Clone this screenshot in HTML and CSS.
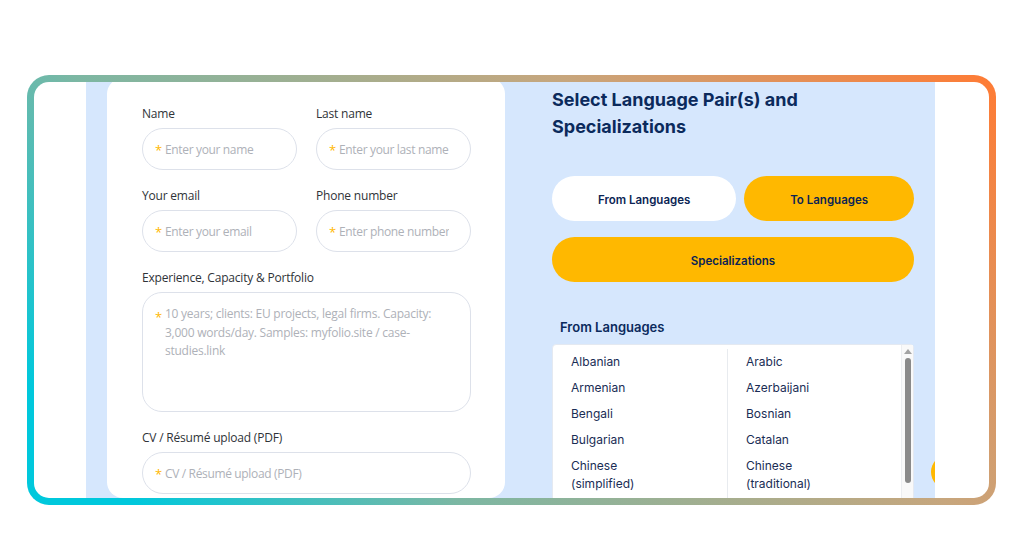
FILE: index.html
```html
<!DOCTYPE html>
<html lang="en">
<head>
    <meta charset="UTF-8">
    <meta name="viewport" content="width=device-width, initial-scale=1.0">
    <title>Translator application</title>
    <link rel="stylesheet" href="styles.css">
</head>
<body>
    <div class="frame">
        <div class="frame-inner">
            <div class="panel">
                <!-- left: contact form -->
                <div class="card">
                    <div class="row">
                        <div class="field">
                            <label class="field-label">Name</label>
                            <div class="input-box">
                                <span class="req">*</span>
                                <input class="input" type="text" placeholder="Enter your name">
                            </div>
                        </div>
                        <div class="field">
                            <label class="field-label">Last name</label>
                            <div class="input-box">
                                <span class="req">*</span>
                                <input class="input" type="text" placeholder="Enter your last name">
                            </div>
                        </div>
                    </div>
                    <div class="row">
                        <div class="field">
                            <label class="field-label">Your email</label>
                            <div class="input-box">
                                <span class="req">*</span>
                                <input class="input" type="email" placeholder="Enter your email">
                            </div>
                        </div>
                        <div class="field">
                            <label class="field-label">Phone number</label>
                            <div class="input-box">
                                <span class="req">*</span>
                                <input class="input" type="tel" placeholder="Enter phone number">
                            </div>
                        </div>
                    </div>
                    <div class="field">
                        <label class="field-label">Experience, Capacity &amp; Portfolio</label>
                        <div class="input-box area-box">
                            <span class="req">*</span>
                            <textarea class="input area" placeholder="10 years; clients: EU projects, legal firms. Capacity: 3,000 words/day. Samples: myfolio.site / case-studies.link"></textarea>
                        </div>
                    </div>
                    <div class="field">
                        <label class="field-label">CV / Résumé upload (PDF)</label>
                        <div class="input-box">
                            <span class="req">*</span>
                            <input class="input" type="text" placeholder="CV / Résumé upload (PDF)">
                        </div>
                    </div>
                </div>

                <!-- right: language pairs -->
                <div class="pairs">
                    <h2 class="pairs-title">Select Language Pair(s) and Specializations</h2>
                    <div class="tabs">
                        <button class="tab tab-active">From Languages</button>
                        <button class="tab">To Languages</button>
                        <button class="tab tab-wide">Specializations</button>
                    </div>
                    <p class="list-title">From Languages</p>
                    <div class="list-box">
                        <div class="list-cols">
                            <ul class="lang-col">
                                <li>Albanian</li>
                                <li>Armenian</li>
                                <li>Bengali</li>
                                <li>Bulgarian</li>
                                <li>Chinese (simplified)</li>
                            </ul>
                            <ul class="lang-col">
                                <li>Arabic</li>
                                <li>Azerbaijani</li>
                                <li>Bosnian</li>
                                <li>Catalan</li>
                                <li>Chinese (traditional)</li>
                            </ul>
                        </div>
                        <div class="scrollbar">
                            <span class="scroll-up"></span>
                            <span class="scroll-thumb"></span>
                        </div>
                    </div>
                </div>

                <span class="fab"></span>
            </div>
        </div>
    </div>
</body>
</html>
```

FILE: styles.css
```css
* {
    box-sizing: border-box;
}
body {
    margin: 0;
    background: #ffffff;
    font-family: 'Open Sans', sans-serif;
}
.frame {
    width: 969px;
    height: 430px;
    margin: 75px 0 0 27px;
    padding: 7px;
    border-radius: 22px;
    background: linear-gradient(48deg, #00c8dc 0%, #00c8dc 8%, #7cb7a3 32%, #c7a67d 68%, #ff7b34 100%);
}
.frame-inner {
    height: 100%;
    border-radius: 15px;
    background: #ffffff;
    overflow: hidden;
}
.panel {
    position: relative;
    display: flex;
    width: 849px;
    height: 100%;
    margin-left: 52px;
    padding-left: 21px;
    background: #d6e7fd;
    overflow: hidden;
}

/* form card */
.card {
    width: 398px;
    flex-shrink: 0;
    margin-top: -4px;
    padding: 27px 34px 0 35px;
    background: #ffffff;
    border-radius: 16px;
}
.row {
    display: flex;
    gap: 19px;
}
.row .field {
    flex: 1 1 0;
    min-width: 0;
}
.field {
    margin-bottom: 17px;
}
.field-label {
    display: block;
    margin-bottom: 5px;
    font-size: 12px;
    letter-spacing: -0.2px;
    line-height: 18px;
    color: #2f3338;
}
.input-box {
    display: flex;
    align-items: center;
    height: 42px;
    padding: 0 21px 0 12px;
    border: 1px solid #dde1ea;
    border-radius: 21px;
    background: #ffffff;
}
.req {
    width: 10px;
    flex-shrink: 0;
    font-family: 'Open Sans', sans-serif;
    font-size: 13px;
    color: #ffb800;
    line-height: 1;
    padding-top: 3px;
}
.input {
    flex: 1;
    width: 0;
    min-width: 0;
    border: none;
    outline: none;
    padding: 0;
    background: transparent;
    font-family: 'Open Sans', sans-serif;
    font-size: 12px;
    letter-spacing: -0.35px;
    color: #2f3338;
}
.input::placeholder {
    color: #aeb1b8;
}
.area-box {
    height: 120px;
    align-items: flex-start;
    padding-top: 12px;
    border-radius: 20px;
}
.area-box .req {
    padding-top: 6px;
}
.area {
    height: 96px;
    resize: none;
    letter-spacing: -0.25px;
    line-height: 18.5px;
}

/* language pairs */
.pairs {
    width: 362px;
    flex-shrink: 0;
    margin-left: 47px;
    padding-top: 4px;
    font-family: 'Inter', sans-serif;
    color: #0b2a5c;
}
.pairs-title {
    margin: 0;
    font-size: 18px;
    font-weight: 700;
    line-height: 27px;
    width: 300px;
}
.tabs {
    display: flex;
    flex-wrap: wrap;
    gap: 16px 8px;
    margin-top: 36px;
}
.tab {
    flex: 1 1 auto;
    height: 45px;
    padding: 2px 40px 0;
    border: none;
    border-radius: 23px;
    background: #ffb800;
    font-family: 'Inter', sans-serif;
    font-size: 11.5px;
    font-weight: 600;
    color: #0b2454;
    cursor: pointer;
}
.tab-active {
    background: #ffffff;
}
.tab-wide {
    flex-basis: 100%;
}
.list-title {
    margin: 36px 0 8px 8px;
    font-size: 13px;
    font-weight: 600;
    line-height: 18px;
}
.list-box {
    display: flex;
    height: 200px;
    background: #ffffff;
    border: 1px solid #e4e9f1;
    border-radius: 4px;
}
.list-cols {
    flex: 1;
    display: grid;
    grid-template-columns: 175px 1fr;
    padding-top: 4px;
}
.lang-col {
    list-style: none;
    margin: 0;
    padding: 0;
}
.lang-col:first-child {
    border-right: 1px solid #e8ebef;
}
.lang-col li {
    padding: 4px 60px 4px 18px;
    font-size: 12px;
    line-height: 18px;
    color: #1a2d55;
}
.scrollbar {
    width: 12px;
    flex-shrink: 0;
    display: flex;
    flex-direction: column;
    align-items: center;
    padding-top: 4px;
    border-left: 1px solid #eceef1;
    background: #f9f9f9;
}
.scroll-up {
    width: 0;
    height: 0;
    border-left: 4px solid transparent;
    border-right: 4px solid transparent;
    border-bottom: 5px solid #a3a3a3;
}
.scroll-thumb {
    width: 6px;
    height: 125px;
    margin-top: 4px;
    border-radius: 3px;
    background: #8a8a8a;
}
.fab {
    position: absolute;
    left: 845px;
    top: 373px;
    width: 34px;
    height: 34px;
    border-radius: 50%;
    background: #ffb800;
}
```
